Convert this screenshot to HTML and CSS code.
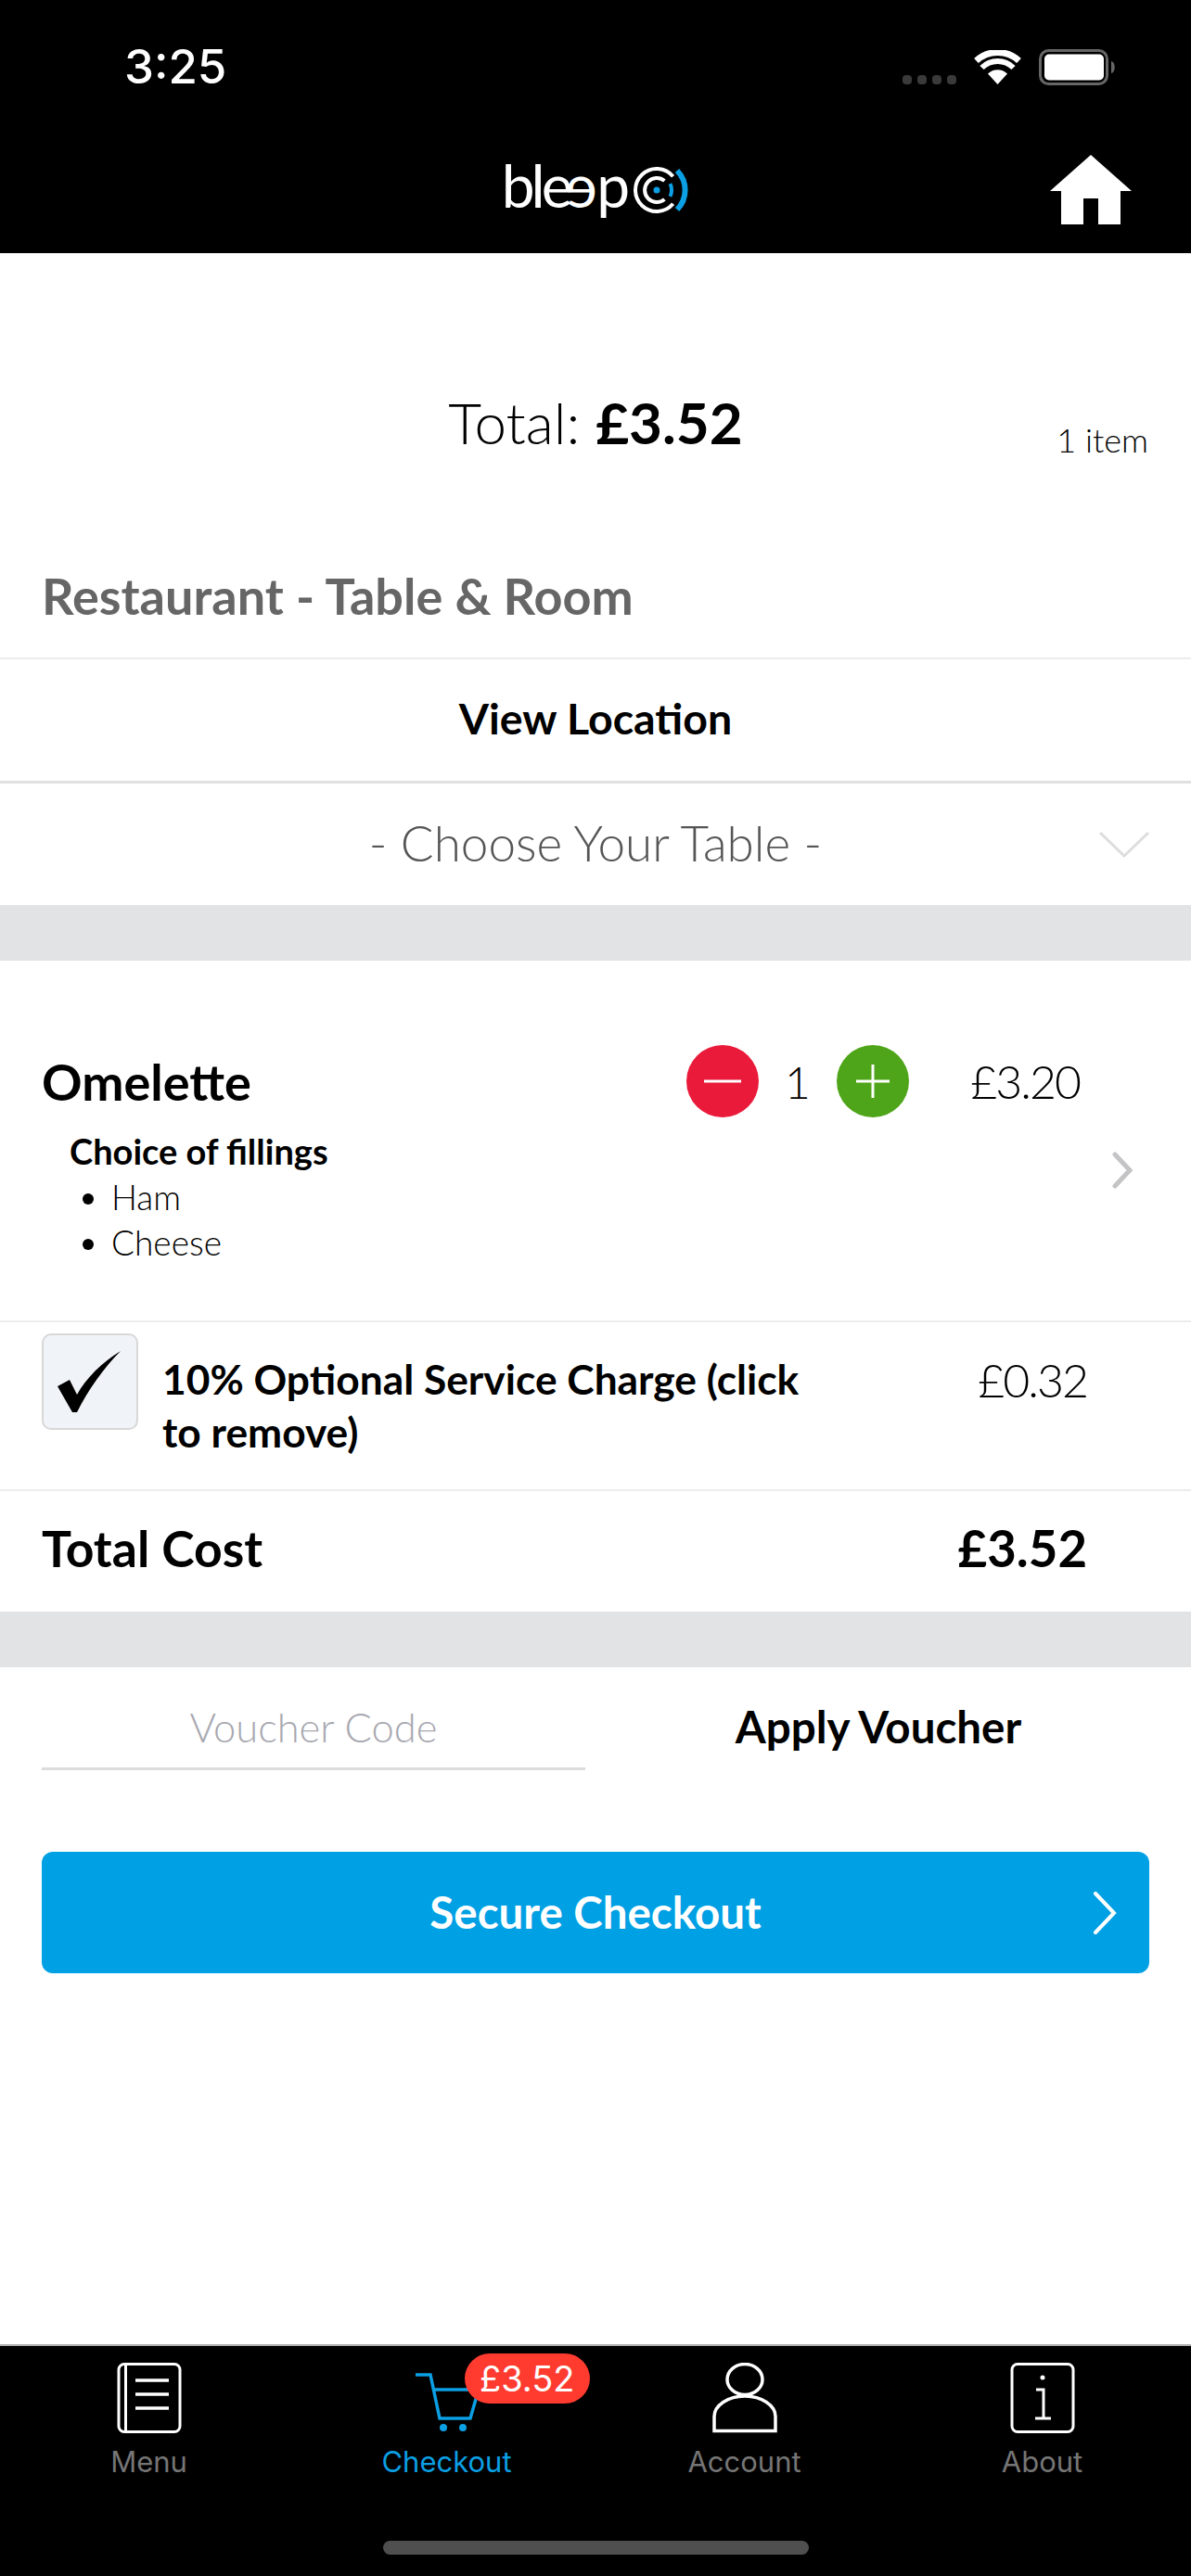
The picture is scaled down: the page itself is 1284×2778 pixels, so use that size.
FILE: index.html
```html
<!DOCTYPE html>
<html lang="en">

<head>
    <meta charset="UTF-8">
    <meta name="viewport" content="width=device-width, initial-scale=1.0">
    <title>Checkout</title>
    <link rel="stylesheet" href="styles.css">
</head>

<body>
    <div class="app">
        <!-- Status bar and logo -->
        <header class="header">
            <div class="status">
                <span class="clock">3:25</span>
                <div class="status-icons">
                    <span class="signal"><i></i><i></i><i></i><i></i></span>
                    <svg class="wifi" width="51" height="37" viewBox="0 0 51 37">
                        <path d="M25.5 37 15 25.5a15 15 0 0 1 21 0z" fill="#fff"/>
                        <path d="M8.5 19a24 24 0 0 1 34 0" fill="none" stroke="#fff" stroke-width="6"/>
                        <path d="M2.5 11.5a34 34 0 0 1 46 0" fill="none" stroke="#fff" stroke-width="7"/>
                    </svg>
                    <svg class="battery" width="82" height="39" viewBox="0 0 82 39">
                        <rect x="1.5" y="1.5" width="72" height="36" rx="9" fill="none" stroke="#666" stroke-width="3"/>
                        <rect x="6" y="5.5" width="64" height="28" rx="5" fill="#fff"/>
                        <path d="M78 13c5 1 5 12 0 13z" fill="#666"/>
                    </svg>
                </div>
            </div>
            <div class="brand">
                <div class="logo">
                    <span class="logo-word">ble<span class="logo-flip">e</span>p</span>
                    <svg width="60" height="60" viewBox="0 0 60 60" fill="none">
                        <path d="M42.6 15.2A23 23 0 1 0 42.6 44.8" stroke="#fff" stroke-width="4"/>
                        <path d="M33.4 20A13 13 0 1 0 33.4 40" stroke="#fff" stroke-width="4"/>
                        <circle cx="25" cy="30" r="3.5" fill="#0b9fe3"/>
                        <path d="M39.5 23.2A16 16 0 0 1 39.5 36.8" stroke="#0b9fe3" stroke-width="4"/>
                        <path d="M47 9A30 30 0 0 1 47 51" stroke="#0b9fe3" stroke-width="6"/>
                    </svg>
                </div>
                <svg class="home" width="88" height="75" viewBox="0 0 88 75">
                    <path d="M44 0 88 39H76V75H52V47H36V75H12V39H0z" fill="#fff"/>
                </svg>
            </div>
        </header>

        <main class="content">
            <div class="summary">
                <div class="summary-total">Total: <b>£3.52</b></div>
                <div class="summary-count">1 item</div>
            </div>

            <div class="section-title">Restaurant - Table &amp; Room</div>
            <div class="row-link">View Location</div>
            <div class="row-select">
                <span>- Choose Your Table -</span>
                <svg class="select-arrow" width="56" height="32" viewBox="0 0 56 32">
                    <path d="M2 3 28 28 54 3" fill="none" stroke="#dddddf" stroke-width="3"/>
                </svg>
            </div>

            <div class="band"></div>

            <div class="item">
                <div class="item-top">
                    <span class="item-name">Omelette</span>
                    <div class="stepper">
                        <span class="step minus"><svg width="44" height="44" viewBox="0 0 44 44"><path d="M2 22H42" stroke="#fff" stroke-width="3"/></svg></span>
                        <span class="qty">1</span>
                        <span class="step plus"><svg width="44" height="44" viewBox="0 0 44 44"><path d="M4 22H40M22 4V40" stroke="#fff" stroke-width="3"/></svg></span>
                    </div>
                    <span class="item-price">£3.20</span>
                </div>
                <div class="item-detail">
                    <div class="options">
                        <div class="options-title">Choice of fillings</div>
                        <ul>
                            <li>Ham</li>
                            <li>Cheese</li>
                        </ul>
                    </div>
                    <svg class="item-arrow" width="26" height="40" viewBox="0 0 26 40">
                        <path d="M4 3 20 20 4 37" fill="none" stroke="#c4c4c6" stroke-width="5" stroke-linecap="round"/>
                    </svg>
                </div>
            </div>

            <div class="service">
                <span class="checkbox">
                    <svg width="70" height="66" viewBox="0 0 70 66">
                        <path d="M0 38 13 31 21 47C31 29 48 12 68 0 50 18 33 42 21 66H16z" fill="#000"/>
                    </svg>
                </span>
                <span class="service-text">10% Optional Service Charge (click to remove)</span>
                <span class="service-price">£0.32</span>
            </div>

            <div class="cost">
                <span>Total Cost</span>
                <span class="cost-value">£3.52</span>
            </div>

            <div class="band"></div>

            <div class="voucher">
                <span class="voucher-input">Voucher Code</span>
                <span class="voucher-apply">Apply Voucher</span>
            </div>

            <div class="checkout-btn">
                Secure Checkout
                <svg class="checkout-arrow" width="28" height="46" viewBox="0 0 28 46">
                    <path d="M4 2 24 23 4 44" fill="none" stroke="#fff" stroke-width="4" stroke-linecap="round"/>
                </svg>
            </div>
        </main>

        <!-- Bottom tabs -->
        <nav class="tabs">
            <div class="tab">
                <svg width="70" height="76" viewBox="0 0 70 76" fill="none" stroke="#fff" stroke-width="3">
                    <rect x="2" y="1.5" width="66" height="73" rx="6"/>
                    <path d="M9.5 2V74"/>
                    <path d="M20 19H56M20 34H56M20 49H56" stroke-width="3.5"/>
                </svg>
                <span>Menu</span>
            </div>
            <div class="tab active">
                <span class="tab-badge">£3.52</span>
                <svg width="70" height="76" viewBox="0 0 70 76" fill="none" stroke="#0b9fe3" stroke-width="3.5">
                    <path d="M1 13H17L27 60H60L69 29H21"/>
                    <circle cx="31" cy="70" r="4" fill="#0b9fe3" stroke="none"/>
                    <circle cx="52" cy="70" r="4" fill="#0b9fe3" stroke="none"/>
                </svg>
                <span>Checkout</span>
            </div>
            <div class="tab">
                <svg width="70" height="76" viewBox="0 0 70 76" fill="none" stroke="#fff" stroke-width="3.5">
                    <ellipse cx="35" cy="18" rx="19" ry="16.5"/>
                    <path d="M2 73.5V58C2 46 17 36 35 36S68 46 68 58V73.5z"/>
                </svg>
                <span>Account</span>
            </div>
            <div class="tab">
                <svg width="70" height="76" viewBox="0 0 70 76" fill="none" stroke="#fff" stroke-width="3">
                    <rect x="2" y="1.5" width="66" height="73" rx="6"/>
                    <circle cx="35" cy="16" r="2.5" fill="#fff" stroke="none"/>
                    <path d="M28 29H36V60M27 60H44"/>
                </svg>
                <span>About</span>
            </div>
            <div class="home-indicator"></div>
        </nav>
    </div>
</body>

</html>
```

FILE: styles.css
```css
body {
    font-family: Lato, "Open Sans", sans-serif;
    background-color: #fff;
    margin: 0;
    color: #000;
}

.app {
    width: 1284px;
    height: 2778px;
    display: flex;
    flex-direction: column;
    overflow: hidden;
}

/* header */
.header {
    background-color: #000;
    height: 273px;
    flex-shrink: 0;
    color: #fff;
}

.status {
    height: 142px;
    display: flex;
    justify-content: space-between;
    align-items: flex-start;
    padding: 0 82px 0 134px;
}

.clock {
    font-family: Inter, sans-serif;
    font-size: 51px;
    font-weight: 500;
    line-height: 144px;
}

.status-icons {
    display: flex;
    align-items: flex-start;
    gap: 19px;
    padding-top: 53px;
}

.signal {
    display: flex;
    gap: 6px;
    padding-top: 28px;
}

.signal i {
    width: 10px;
    height: 10px;
    border-radius: 4px;
    background-color: #3a3a3a;
}

.wifi {
    margin-top: 1px;
}

.brand {
    display: flex;
    justify-content: center;
    position: relative;
}

.logo {
    display: flex;
    align-items: flex-start;
    gap: 8px;
    padding-top: 28px;
}

.logo-word {
    font-size: 64px;
    font-weight: 400;
    line-height: 60px;
    letter-spacing: -4px;
}

.logo-flip {
    display: inline-block;
    transform: scaleX(-1);
}

.logo svg {
    margin-top: 5px;
}

.home {
    position: absolute;
    right: 64px;
    top: 25px;
}

/* total on top */
.summary {
    height: 304px;
    box-sizing: border-box;
    padding: 145px 46px 0;
    display: grid;
    grid-template-columns: 1fr auto 1fr;
    align-items: start;
}

.summary-total {
    grid-column: 2;
    font-size: 62px;
    font-weight: 300;
    line-height: 74px;
}

.summary-total b {
    font-weight: 700;
}

.summary-count {
    grid-column: 3;
    justify-self: end;
    padding-top: 34px;
    font-size: 36px;
    font-weight: 300;
}

.section-title {
    height: 134px;
    padding: 0 45px 2px;
    display: flex;
    align-items: center;
    font-size: 54px;
    font-weight: 700;
    color: #666;
    box-sizing: border-box;
    border-bottom: 2px solid #ececec;
}

.row-link {
    height: 134px;
    padding-bottom: 6px;
    display: flex;
    align-items: center;
    justify-content: center;
    font-size: 46.5px;
    font-weight: 700;
    box-sizing: border-box;
    border-bottom: 3px solid #e0e0e0;
}

.row-select {
    height: 131px;
    box-sizing: border-box;
    padding-bottom: 5px;
    display: flex;
    align-items: center;
    justify-content: center;
    font-size: 53px;
    font-weight: 300;
    color: #555;
    position: relative;
}

.select-arrow {
    position: absolute;
    right: 44px;
    top: 50px;
}

.band {
    height: 60px;
    background-color: #e2e3e5;
    flex-shrink: 0;
}

/* order item */
.item {
    height: 390px;
    box-sizing: border-box;
    border-bottom: 2px solid #ececec;
    padding: 90px 0 0 45px;
}

.item-top {
    display: flex;
    align-items: center;
    height: 80px;
    padding-right: 120px;
}

.item-name {
    font-size: 54px;
    font-weight: 700;
    width: 695px;
}

.stepper {
    display: flex;
    align-items: center;
}

.step {
    width: 78px;
    height: 78px;
    border-radius: 50%;
    display: flex;
    align-items: center;
    justify-content: center;
}

.minus {
    background-color: #ea1a3a;
}

.plus {
    background-color: #4fa519;
}

.qty {
    width: 84px;
    text-align: center;
    font-size: 48px;
    font-weight: 300;
}

.item-price {
    margin-left: auto;
    font-size: 50px;
    font-weight: 300;
    letter-spacing: -2px;
}

.item-detail {
    display: flex;
    justify-content: space-between;
    padding: 10px 60px 0 30px;
}

.options-title {
    font-size: 38px;
    font-weight: 700;
    line-height: 50px;
}

.options ul {
    margin: 0;
    padding-left: 45px;
    font-size: 37px;
    font-weight: 300;
    line-height: 49px;
}

.item-arrow {
    margin-top: 26px;
}

/* service charge */
.service {
    height: 182px;
    box-sizing: border-box;
    border-bottom: 2px solid #ececec;
    padding: 12px 112px 0 45px;
    display: flex;
    align-items: flex-start;
}

.checkbox {
    width: 104px;
    height: 104px;
    box-sizing: border-box;
    background-color: #f0f3f8;
    border: 2px solid #d8d8d8;
    border-radius: 10px;
    display: flex;
    align-items: center;
    justify-content: center;
    flex-shrink: 0;
}

.service-text {
    width: 700px;
    margin-left: 26px;
    font-size: 44.3px;
    font-weight: 700;
    line-height: 57px;
    padding-top: 20px;
    flex-shrink: 0;
}

.service-price {
    margin-left: auto;
    font-size: 50px;
    font-weight: 300;
    letter-spacing: -2px;
    padding-top: 20px;
}

.cost {
    height: 130px;
    box-sizing: border-box;
    padding: 0 112px 8px 45px;
    display: flex;
    align-items: center;
    justify-content: space-between;
    font-size: 53.5px;
    font-weight: 700;
}

.cost-value {
    font-size: 54.5px;
}

/* voucher */
.voucher {
    height: 110px;
    display: flex;
    padding-left: 45px;
    align-items: flex-start;
}

.voucher-input {
    width: 586px;
    height: 111px;
    padding-top: 23px;
    line-height: 82px;
    box-sizing: border-box;
    border-bottom: 3px solid #dcdcdc;
    text-align: center;
    font-size: 43.5px;
    font-weight: 300;
    color: #a8a8b0;
}

.voucher-apply {
    width: 632px;
    text-align: center;
    padding-top: 23px;
    line-height: 82px;
    font-size: 47.5px;
    font-weight: 700;
}

.checkout-btn {
    margin: 89px 45px 0;
    height: 131px;
    padding-bottom: 2px;
    box-sizing: border-box;
    background-color: #00a0e4;
    border-radius: 12px;
    color: #fff;
    font-size: 47.5px;
    font-weight: 700;
    display: flex;
    align-items: center;
    justify-content: center;
    position: relative;
}

.checkout-arrow {
    position: absolute;
    right: 34px;
    top: 43px;
}

/* tabs */
.tabs {
    margin-top: auto;
    height: 250px;
    box-sizing: border-box;
    background-color: #000;
    border-top: 2px solid #b0b0b0;
    display: flex;
    padding-top: 18px;
    position: relative;
}

.tab {
    width: 321px;
    display: flex;
    flex-direction: column;
    align-items: center;
    gap: 12px;
    position: relative;
    font-family: Inter, sans-serif;
    font-size: 31px;
    color: #757575;
}

.tab svg {
    display: block;
}

.tab.active {
    color: #0b9fe3;
}

.tab-badge {
    position: absolute;
    left: 180px;
    top: -10px;
    height: 54px;
    line-height: 54px;
    padding: 0 16px;
    border-radius: 27px;
    background-color: #ff3b30;
    color: #fff;
    font-size: 38px;
}

.home-indicator {
    position: absolute;
    left: 413px;
    bottom: 23px;
    width: 459px;
    height: 15px;
    border-radius: 8px;
    background-color: #4f4f4f;
}
```
